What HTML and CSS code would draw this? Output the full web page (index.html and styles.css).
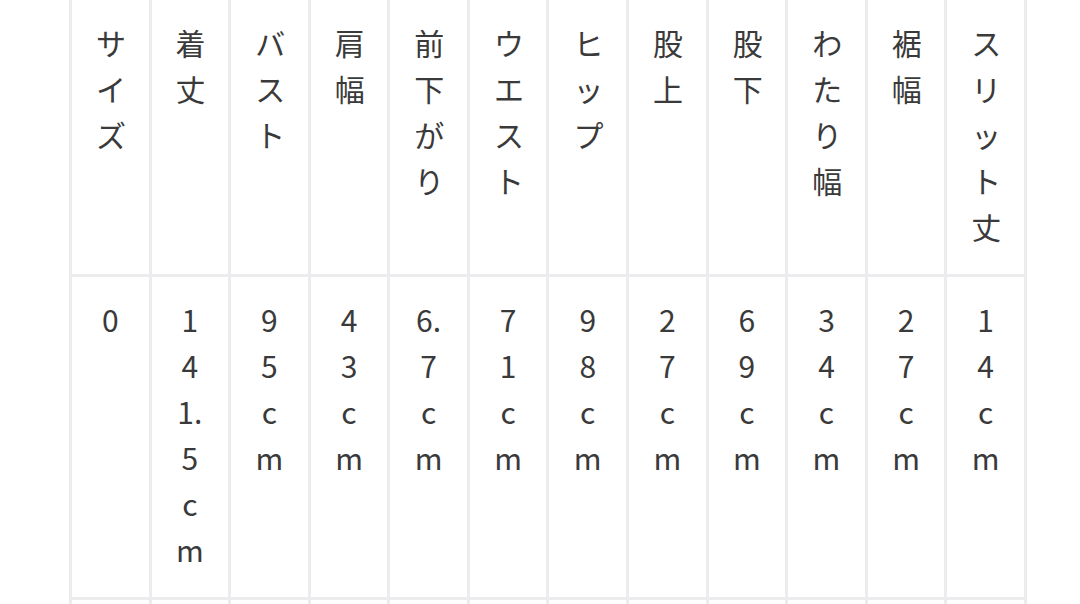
FILE: index.html
```html
<!DOCTYPE html>
<html lang="ja">
<head>
<meta charset="utf-8">
<title>サイズ表</title>
<link rel="stylesheet" href="styles.css">
</head>
<body>
<div class="wrap">
<table class="size-table">
<thead>
<tr>
<th>サイズ</th><th>着丈</th><th>バスト</th><th>肩幅</th><th>前下がり</th><th>ウエスト</th><th>ヒップ</th><th>股上</th><th>股下</th><th>わたり幅</th><th>裾幅</th><th>スリット丈</th>
</tr>
</thead>
<tbody>
<tr>
<td>0</td><td>141.5cm</td><td>95cm</td><td>43cm</td><td>6.7cm</td><td>71cm</td><td>98cm</td><td>27cm</td><td>69cm</td><td>34cm</td><td>27cm</td><td>14cm</td>
</tr>
<tr class="next">
<td>&nbsp;</td><td>&nbsp;</td><td>&nbsp;</td><td>&nbsp;</td><td>&nbsp;</td><td>&nbsp;</td><td>&nbsp;</td><td>&nbsp;</td><td>&nbsp;</td><td>&nbsp;</td><td>&nbsp;</td><td>&nbsp;</td>
</tr>
</tbody>
</table>
</div>
</body>
</html>
```

FILE: styles.css
```css
html, body {
  margin: 0;
  padding: 0;
  background: #ffffff;
}

body {
  font-family: "Noto Sans CJK JP", "Noto Sans", sans-serif;
  color: #3a3a3a;
  overflow: hidden;
}

.wrap {
  padding-left: 69px;
  margin-top: -3px;
}

.size-table {
  table-layout: fixed;
  width: 958px;
  border-collapse: separate;
  border-spacing: 0;
  border-top: 3px solid #ececef;
  border-left: 3px solid #ececef;
}

.size-table th,
.size-table td {
  border-right: 3px solid #ececef;
  border-bottom: 3px solid #ececef;
  padding: 19px 24px 25px;
  font-size: 30px;
  font-weight: 400;
  line-height: 46px;
  text-align: center;
  vertical-align: top;
  word-break: break-all;
}
```
